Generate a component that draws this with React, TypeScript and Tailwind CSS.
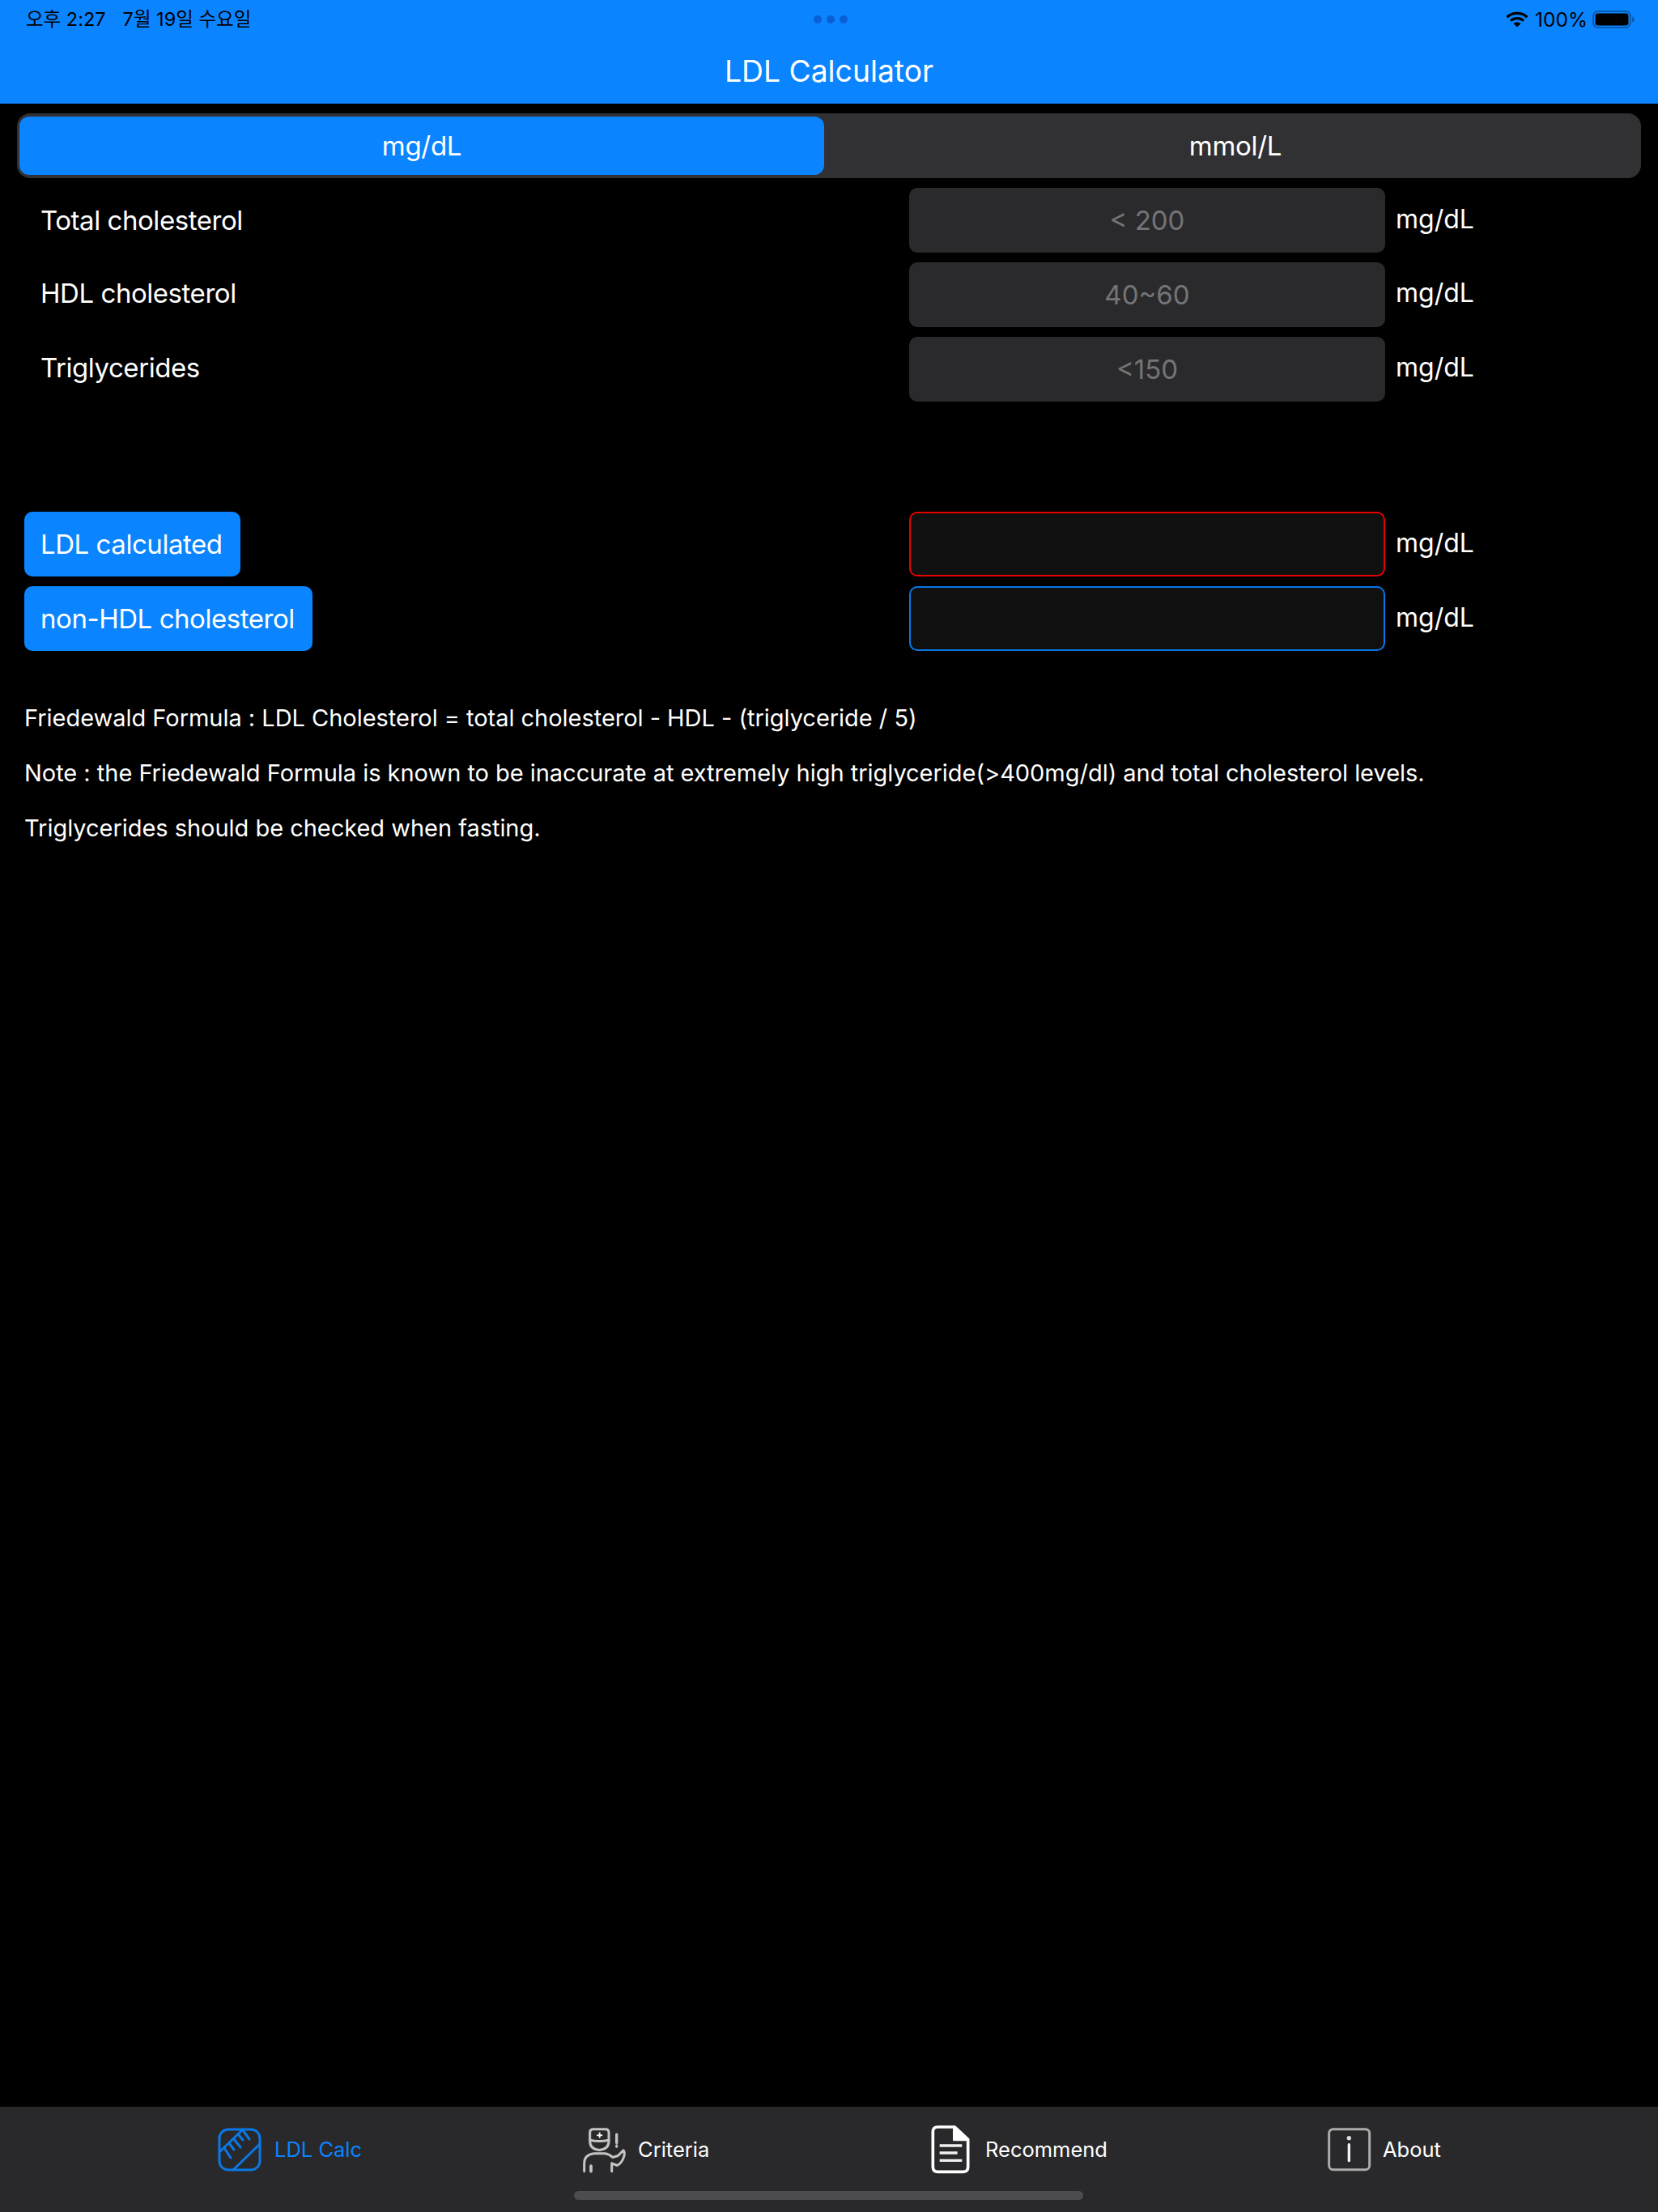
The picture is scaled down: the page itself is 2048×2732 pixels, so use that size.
import React from "react";

function Wifi() {
  return (
    <svg width="28" height="20" viewBox="0 0 28 20" fill="none" className="block">
      <path d="M1.5 7.2C8.5 0.8 19.5 0.8 26.5 7.2" stroke="#000" strokeWidth="3.2" />
      <path d="M6 11.6C10.5 7.6 17.5 7.6 22 11.6" stroke="#000" strokeWidth="3.2" />
      <path d="M14 19.6L9.4 15C12 12.9 16 12.9 18.6 15Z" fill="#000" />
    </svg>
  );
}

function Battery() {
  return (
    <svg width="52" height="22" viewBox="0 0 52 22" fill="none" className="block">
      <rect x="1" y="1" width="46" height="20" rx="6" stroke="#085cb4" strokeWidth="2" />
      <rect x="3.5" y="3.5" width="41" height="15" rx="3.5" fill="#000" />
      <path d="M49 7.5C51 8 52 9.5 52 11C52 12.5 51 14 49 14.5Z" fill="#085cb4" />
    </svg>
  );
}

function RulerIcon() {
  return (
    <svg width="54" height="54" viewBox="0 0 54 54" fill="none" stroke="#0a78e6" strokeWidth="3" strokeLinecap="round" className="block">
      <rect x="2" y="2" width="50" height="50" rx="11" />
      <path d="M52 20L19 52" />
      <path d="M31 2L2 30" />
      <path d="M8 25L16 37" />
      <path d="M14 19L20 27" />
      <path d="M20 14L28 24" />
      <path d="M26 9L31 15" />
      <path d="M31 3L39 14" />
    </svg>
  );
}

function DoctorIcon() {
  return (
    <svg width="55" height="57" viewBox="55 70 165 170" fill="none" stroke="#c4c4c4" strokeWidth="9" strokeLinecap="round" strokeLinejoin="round" className="block">
      <path d="M96 78H142Q154 78 154 90V122Q154 152 119 155Q84 152 84 122V90Q84 78 96 78Z" />
      <path d="M84 118Q119 126 154 118" />
      <path d="M120 92V108M112 100H128" stroke="#f0f0f0" strokeWidth="6" />
      <path d="M183 97V128" strokeWidth="10" />
      <path d="M183 138V142" strokeWidth="9" />
      <path d="M63 234V205Q63 172 100 168H140Q155 170 168 182L188 176L208 156Q216 165 208 185Q200 205 185 212L165 204V234" />
      <path d="M88 214V234" strokeWidth="11" />
    </svg>
  );
}

function DocIcon() {
  return (
    <svg width="48" height="60" viewBox="30 40 144 180" fill="none" stroke="#fff" strokeWidth="11" strokeLinejoin="round" className="block">
      <path d="M55 46H118L167 92V194Q167 212 150 212H55Q37 212 37 194V64Q37 46 55 46Z" />
      <path d="M115 46V94H167Z" fill="#fff" strokeWidth="8" />
      <path d="M62 115H145M62 142H128M62 170H145" strokeWidth="10" stroke="#f0f0f0" />
    </svg>
  );
}

function InfoIcon() {
  return (
    <svg width="54" height="54" viewBox="58 50 162 162" fill="none" stroke="#ababab" strokeWidth="9" className="block">
      <rect x="63" y="55" width="150" height="150" rx="15" />
      <circle cx="137" cy="88" r="8" fill="#ddd" stroke="none" />
      <path d="M137 112V172" stroke="#f4f4f4" strokeWidth="10" strokeLinecap="round" />
    </svg>
  );
}

function Unit({ nudge }: { nudge: string }) {
  return <span className={`ml-[13px] text-[32px] leading-[40px] text-white ${nudge}`}>mg/dL</span>;
}

function InputRow({ label, hint, labelNudge, unitNudge }: { label: string; hint: string; labelNudge: string; unitNudge: string }) {
  return (
    <div className="flex h-[80px] items-center">
      <div className={`w-[1102px] pl-[29px] text-[33px] leading-[40px] tracking-[-0.45px] text-white ${labelNudge}`}>{label}</div>
      <div className="flex h-[80px] w-[588px] items-center justify-center rounded-[10px] bg-[#2a2a2c] text-[33px] leading-[40px] text-[#747476]">
        {hint}
      </div>
      <Unit nudge={unitNudge} />
    </div>
  );
}

function ResultRow({ label, border }: { label: string; border: string }) {
  return (
    <div className="flex h-[80px] items-center">
      <div className="w-[1093px]">
        <div className="inline-flex h-[80px] items-center rounded-[10px] bg-[#0a84ff] pl-[20px] pr-[22px] text-[33px] leading-[40px] tracking-[-0.45px] text-white">
          {label}
        </div>
      </div>
      <div className={`h-[80px] w-[588px] rounded-[10px] border-2 bg-[#101011] ${border}`} />
      <Unit nudge="pb-[2px]" />
    </div>
  );
}

function Tab({ icon, label, active, cls }: { icon: React.ReactNode; label: string; active?: boolean; cls: string }) {
  return (
    <div className={`flex items-center ${cls}`}>
      {icon}
      <span className={`text-[25.5px] leading-[36px] ${active ? "text-[#0a84ff]" : "text-white"}`}>{label}</span>
    </div>
  );
}

export default function App() {
  return (
    <div className="flex h-[2732px] w-[2048px] flex-col overflow-hidden bg-black font-['Inter','Noto_Sans_CJK_KR',sans-serif]">
      <header className="h-[128px] bg-[#0a84ff]">
        <div className="grid h-[48px] grid-cols-[1fr_auto_1fr] items-center pl-[32px] pr-[29px] text-[23.5px] leading-[30px] text-black">
          <div className="flex gap-[21px]">
            <span>오후 2:27</span>
            <span>7월 19일 수요일</span>
          </div>
          <div className="flex gap-[6px]">
            <span className="h-[10px] w-[10px] rounded-full bg-[#0a5fd6]" />
            <span className="h-[10px] w-[10px] rounded-full bg-[#0a5fd6]" />
            <span className="h-[10px] w-[10px] rounded-full bg-[#0a5fd6]" />
          </div>
          <div className="flex items-center justify-end">
            <Wifi />
            <span className="ml-[8px] mr-[6px] text-[24.5px]">100%</span>
            <Battery />
          </div>
        </div>
        <div className="flex h-[80px] items-start justify-center pt-[16px] text-[37.25px] leading-[48px] text-white">LDL Calculator</div>
      </header>

      <main className="flex flex-1 flex-col">
        <div className="mx-[21px] mt-[12px] flex h-[80px] items-center rounded-[16px] bg-[#313133] px-[3px] text-[33px] leading-[40px] tracking-[-0.3px] text-white">
          <div className="flex h-[72px] w-[994px] items-center justify-center rounded-[12px] bg-[#0a84ff]">mg/dL</div>
          <div className="flex h-[72px] flex-1 items-center justify-center pl-[10px]">mmol/L</div>
        </div>

        <div className="ml-[21px] mt-[12px] flex flex-col gap-[12px]">
          <InputRow label="Total cholesterol" hint="< 200" labelNudge="" unitNudge="pb-[2px]" />
          <InputRow label="HDL cholesterol" hint="40~60" labelNudge="pb-[4px]" unitNudge="pb-[4px]" />
          <InputRow label="Triglycerides" hint="<150" labelNudge="pb-[4px]" unitNudge="pb-[4px]" />
        </div>

        <div className="ml-[30px] mt-[136px] flex flex-col gap-[12px]">
          <ResultRow label="LDL calculated" border="border-[#e60000]" />
          <ResultRow label="non-HDL cholesterol" border="border-[#0a78e6]" />
        </div>

        <div className="ml-[30px] mt-[63px] flex flex-col gap-[28px] text-[29px] leading-[40px] tracking-[-0.03px] text-white">
          <p>Friedewald Formula : LDL Cholesterol = total cholesterol - HDL - (triglyceride / 5)</p>
          <p>Note : the Friedewald Formula is known to be inaccurate at extremely high triglyceride(&gt;400mg/dl) and total cholesterol levels.</p>
          <p>Triglycerides should be checked when fasting.</p>
        </div>
      </main>

      <footer className="relative h-[130px] bg-[#29292b]">
        <div className="flex h-[106px] items-center pl-[269px]">
          <Tab icon={<RulerIcon />} label="LDL Calc" active cls="w-[450px] gap-[16px]" />
          <Tab icon={<DoctorIcon />} label="Criteria" cls="w-[431px] gap-[14px]" />
          <Tab icon={<DocIcon />} label="Recommend" cls="w-[490px] gap-[19px]" />
          <Tab icon={<InfoIcon />} label="About" cls="gap-[14px]" />
        </div>
        <div className="absolute left-[709px] top-[104px] h-[11px] w-[629px] rounded-full bg-[#4c4c4e]" />
      </footer>
    </div>
  );
}
